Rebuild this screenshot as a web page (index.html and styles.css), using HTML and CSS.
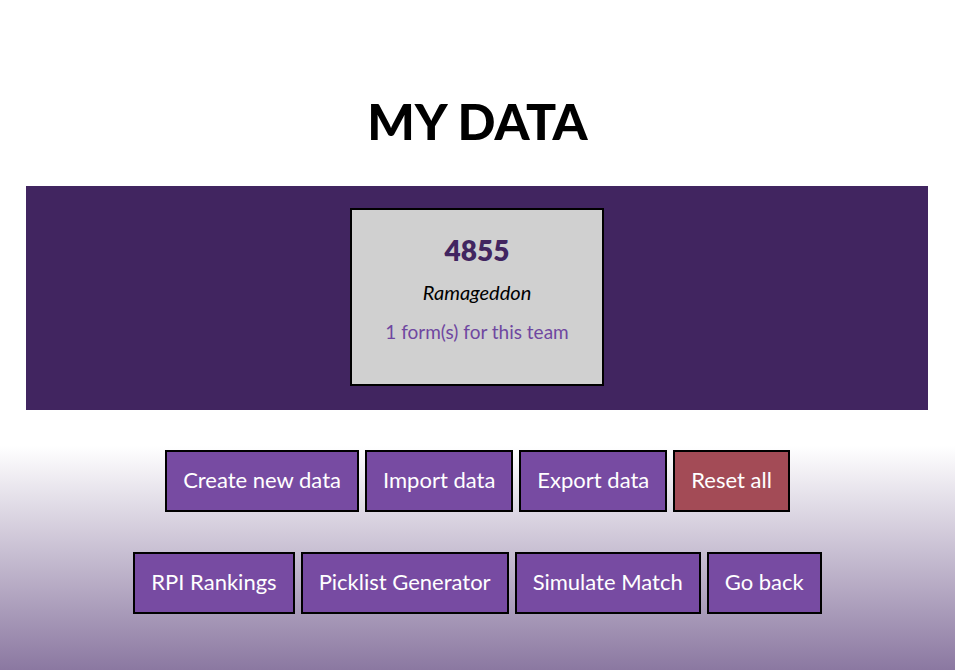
FILE: index.html
```html
<!DOCTYPE html>
<html>
<head>
<meta charset="utf-8">
<title>My Data</title>
<link rel="stylesheet" href="styles.css">
</head>
<body>
<main class="page">
  <h1 class="title">MY DATA</h1>
  <section class="band">
    <div class="card">
      <div class="team-number">4855</div>
      <div class="team-name">Ramageddon</div>
      <div class="team-forms">1 form(s) for this team</div>
    </div>
  </section>
  <div class="row row-first">
    <button class="btn">Create new data</button>
    <button class="btn">Import data</button>
    <button class="btn">Export data</button>
    <button class="btn btn-danger">Reset all</button>
  </div>
  <div class="row row-second">
    <button class="btn">RPI Rankings</button>
    <button class="btn">Picklist Generator</button>
    <button class="btn">Simulate Match</button>
    <button class="btn">Go back</button>
  </div>
</main>
</body>
</html>
```
FILE: styles.css
```css
html, body {
  margin: 0;
  padding: 0;
}
body {
  min-height: 670px;
  background: linear-gradient(to bottom, #ffffff 0px, #ffffff 446px, #8b78a1 670px);
  font-family: Lato, "Open Sans", sans-serif;
  color: #000;
}
.page {
  display: flex;
  flex-direction: column;
  align-items: stretch;
  padding-top: 96px;
}
.title {
  margin: 0;
  text-align: center;
  font-size: 50px;
  line-height: 50px;
  font-weight: 900;
}
.band {
  margin: 40px 27px 0 26px;
  background: #412560;
  padding: 22px 0 24px;
  display: flex;
  justify-content: center;
}
.card {
  width: 254px;
  height: 178px;
  box-sizing: border-box;
  background: #d0d0d0;
  border: 2px solid #000;
  display: flex;
  flex-direction: column;
  align-items: center;
  padding-top: 22px;
}
.team-number {
  font-size: 28px;
  font-weight: 800;
  color: #412560;
  line-height: 36px;
}
.team-name {
  margin-top: 11px;
  font-size: 20px;
  font-style: italic;
  line-height: 26px;
}
.team-forms {
  margin-top: 14px;
  font-size: 19px;
  color: #6f47a0;
  line-height: 26px;
}
.row {
  display: flex;
  justify-content: center;
  gap: 6px;
}
.row-first {
  margin-top: 40px;
}
.row-second {
  margin-top: 40px;
}
.btn {
  height: 62px;
  box-sizing: border-box;
  border: 2px solid #000;
  background: #774ba2;
  color: #fff;
  font-family: Lato, "Open Sans", sans-serif;
  font-size: 22px;
  line-height: 26px;
  padding: 0 16px 3px;
  margin: 0;
  cursor: pointer;
}
.btn-danger {
  background: #a34b56;
}
```
